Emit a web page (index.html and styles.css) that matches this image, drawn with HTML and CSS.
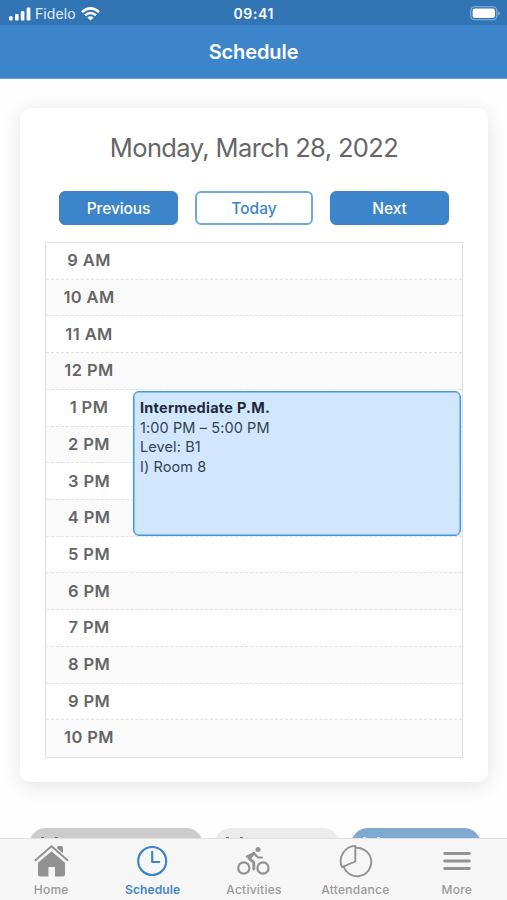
FILE: index.html
```
<!DOCTYPE html>
<html lang="en">
<head>
<meta charset="utf-8">
<title>Schedule</title>
<link rel="stylesheet" href="styles.css">
</head>
<body>
<div class="app">
  <header class="status">
    <div class="carrier">
      <svg width="22" height="14" viewBox="0 0 22 14" fill="#fff"><rect x="0" y="9.2" width="3.6" height="4.2" rx="1"/><rect x="6" y="7" width="3.6" height="6.4" rx="1"/><rect x="11.8" y="4" width="3.6" height="9.4" rx="1"/><rect x="17.6" y="0.5" width="3.8" height="12.9" rx="1"/></svg>
      <span>Fidelo</span>
      <svg width="19" height="14" viewBox="0 0 19 14" fill="none" stroke="#fff" stroke-width="2.5"><path d="M1 5.1Q9.5-2.4 18 5.1M4 8.3Q9.5 3.6 15 8.3"/><path d="M9.5 13.5 6.4 10.5Q9.5 7.8 12.6 10.5Z" fill="#fff" stroke="none"/></svg>
    </div>
    <span class="time">09:41</span>
    <svg class="battery" width="31" height="15" viewBox="0 0 31 15"><rect x=".8" y=".8" width="26" height="13" rx="3.8" fill="none" stroke="#8ab5df" stroke-width="1.1"/><rect x="2.6" y="2.6" width="22.4" height="9.4" rx="2.2" fill="#fff"/><path d="M28.2 5.2v4.4q1.7-.7 1.7-2.2t-1.7-2.2Z" fill="#8ab5df"/></svg>
  </header>
  <div class="titlebar"><h1>Schedule</h1></div>
  <main class="content">
    <section class="card">
      <h2><span>Monday, March 28, 2022</span></h2>
      <div class="buttons">
        <button class="btn">Previous</button>
        <button class="btn outline">Today</button>
        <button class="btn">Next</button>
      </div>
      <div class="hours">
        <div class="row"><span>9 AM</span></div>
        <div class="row"><span>10 AM</span></div>
        <div class="row"><span>11 AM</span></div>
        <div class="row"><span>12 PM</span></div>
        <div class="row"><span>1 PM</span></div>
        <div class="row"><span>2 PM</span></div>
        <div class="row"><span>3 PM</span></div>
        <div class="row"><span>4 PM</span></div>
        <div class="row"><span>5 PM</span></div>
        <div class="row"><span>6 PM</span></div>
        <div class="row"><span>7 PM</span></div>
        <div class="row"><span>8 PM</span></div>
        <div class="row"><span>9 PM</span></div>
        <div class="row"><span>10 PM</span></div>
        <div class="event">
          <strong>Intermediate P.M.</strong>
          <div class="when">1:00 PM – 5:00 PM</div>
          <div class="level">Level: B1</div>
          <div class="room">I) Room 8</div>
        </div>
      </div>
    </section>
    <div class="chips">
      <div class="chip gray"><i></i></div>
      <div class="chip light"><i></i></div>
      <div class="chip blue"><i></i></div>
    </div>
  </main>
  <nav class="tabs">
    <a class="tab home">
      <svg width="36" height="34" viewBox="0 0 36 34"><path d="M24 3.500q0-1.500 1.500-1.500h3q1.500 0 1.500 1.500V13L24 8Z" fill="#929292"/><path d="M2 17 18.500 2.800 35 17" fill="none" stroke="#f6f6f6" stroke-width="5"/><path d="M18.500 7.200 32 18.800V30.500q0 2-2 2H22V23h-6.500v9.500H7q-2 0-2-2V18.800Z" fill="#929292"/><path d="M2.500 16.200 18.500 2.300 34.500 16.200" fill="none" stroke="#929292" stroke-width="2" stroke-linecap="round" stroke-linejoin="round"/></svg>
      <span>Home</span>
    </a>
    <a class="tab schedule active">
      <svg width="36" height="34" viewBox="0 0 36 34" fill="none" stroke="#3d85ca" stroke-width="2.200" stroke-linecap="round" stroke-linejoin="round"><circle cx="18.200" cy="17" r="14"/><path d="M18.200 7.800v10.200h7"/></svg>
      <span>Schedule</span>
    </a>
    <a class="tab activities">
      <svg width="36" height="34" viewBox="0 0 36 34" fill="none" stroke="#929292" stroke-width="2.200" stroke-linecap="round" stroke-linejoin="round"><circle cx="8.800" cy="24" r="5.600"/><circle cx="28" cy="24" r="5.600"/><circle cx="23" cy="5.500" r="2.500" fill="#929292" stroke="none"/><path d="m18.800 9.300-5 4.800 5 4.400v6.500" stroke-width="2.800"/><path d="m18.800 9.200 4.400 4.300h3.800"/><path d="m18.800 9.300-7 3.200M18.500 9.500l-3.500 5" /></svg>
      <span>Activities</span>
    </a>
    <a class="tab attendance">
      <svg width="36" height="34" viewBox="0 0 36 34" fill="none" stroke="#929292" stroke-width="1.900" stroke-linejoin="round"><path d="M18.300 1.900V17.500L5 23.200A15.200 15.200 0 0 1 18.300 1.900Z"/><path d="M18.300 3.900A14.200 14.200 0 1 1 6.700 22.800"/></svg>
      <span>Attendance</span>
    </a>
    <a class="tab more">
      <svg width="36" height="34" viewBox="0 0 36 34" fill="none" stroke="#929292" stroke-width="2.900" stroke-linecap="round"><path d="M6.700 9.500h24.600M6.700 17h24.600M6.700 24.500h24.600"/></svg>
      <span>More</span>
    </a>
  </nav>
</div>
</body>
</html>
```
FILE: styles.css
```
* { box-sizing: border-box; }
body { margin: 0; font-family: Inter, "Liberation Sans", sans-serif; background: #fefefe; color: #666; }
.app { height: 900px; display: flex; flex-direction: column; overflow: hidden; }
.status { height: 25px; flex: none; background: #3175b5; color: #fff; display: grid; grid-template-columns: 1fr auto 1fr; align-items: center; padding: 2px 6px 0 9px; }
.carrier { display: flex; align-items: center; font-size: 14px; letter-spacing: .1px; color: #e1edf8; }
.carrier span { margin: 0 5px 0 4px; }
.time { font-size: 14px; font-weight: 600; letter-spacing: .6px; margin-right: 2.500px; }
.battery { justify-self: end; }
.titlebar { height: 54px; flex: none; background: #3d85ca; border-bottom: 1px solid #689fd5; display: flex; align-items: center; justify-content: center; color: #fff; padding-top: 1px; }
h1 { margin: 0; font-size: 20px; font-weight: 600; letter-spacing: -.1px; }
.content { flex: 1; min-height: 0; overflow: hidden; padding: 29px 19px 0 20px; }
.card { height: 674px; border-radius: 10px; background: #fff; padding: 24px 25px 0; box-shadow: 0 4px 20px rgba(0,0,0,.11); }
h2 { margin: 0; height: 32px; line-height: 32px; text-align: center; font-size: 25.500px; font-weight: 400; letter-spacing: -.62px; color: #666; white-space: nowrap; }
.buttons { display: flex; justify-content: center; gap: 17px; margin-top: 27px; }
.btn { width: 118.500px; height: 34px; border: 1.500px solid #3d85ca; border-radius: 6px; background: #3d85ca; color: #fff; font: 500 15.500px Inter, sans-serif; letter-spacing: -.1px; padding: 0; }
.outline { background: #fff; border: 2px solid #72a7db; color: #3d85ca; letter-spacing: 0; }
.hours { position: relative; margin-top: 17px; height: 516px; border: 1px solid #e0e0e0; display: grid; grid-template-rows: repeat(14, 1fr); }
.row { border-bottom: 1px dashed #e0e0e0; display: flex; align-items: center; padding-bottom: 1px; }
.row:nth-child(even) { background: #fafafa; }
.row:nth-child(14) { border-bottom: 0; padding-bottom: 3px; }
.row span { width: 86px; text-align: center; font-size: 16.500px; font-weight: 600; letter-spacing: .4px; color: #666; }
.event { position: absolute; left: 87px; top: 148px; width: 328px; height: 145px; border: 1px solid #3f97e8; box-shadow: inset 0 0 0 .5px #3f97e8; border-radius: 6px; background: #d1e7ff; padding: 6px; font-size: 14.500px; line-height: 19.600px; letter-spacing: .1px; color: #354250; white-space: nowrap; }
.event strong { display: block; font-weight: 700; letter-spacing: .26px; color: #1d2936; }
.chips { display: flex; gap: 11px; margin: 46px 0 0 9px; }
.chip { height: 34px; border-radius: 17px; padding: 9px 0 0 12px; flex: none; }
.chip i { display: block; width: 17px; height: 14px; border: solid #777; border-width: 0 3px; }
.gray { background: #ccc; width: 174px; }
.light { background: #ececec; width: 126px; }
.blue { background: #7fa9d0; width: 130px; }
.blue i { border-color: #d8e6f2; }
.tabs { height: 62px; flex: none; display: grid; grid-template-columns: repeat(5, 1fr); background: #f6f6f6; border-top: 1px solid #e2e2e2; }
.tab { display: flex; flex-direction: column; align-items: center; padding-top: 5px; font-size: 12px; font-weight: 500; letter-spacing: .25px; line-height: 15px; color: #999; }
.tab span { margin: 4px 0 0 1px; }
.tab.active { color: #3d85ca; font-weight: 600; }
.tab.active span { letter-spacing: .1px; }
```
